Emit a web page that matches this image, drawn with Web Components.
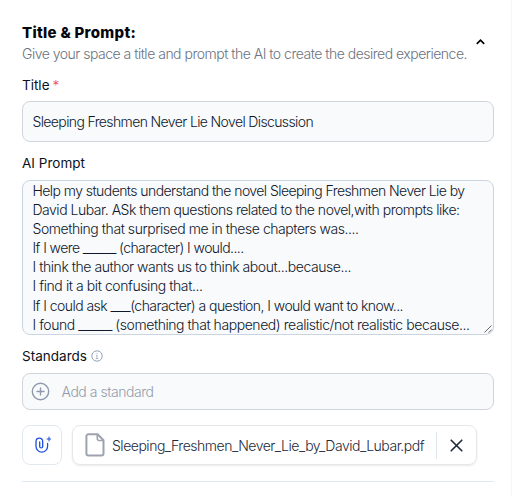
<!DOCTYPE html>
<html lang="en">
<head>
<meta charset="utf-8">
<title>Title &amp; Prompt</title>
<style>
  body {
    margin: 0;
    background: #fff;
    font-family: Inter, "Liberation Sans", sans-serif;
    font-size: 14px;
    color: #0f172a;
  }
</style>
</head>
<body>
<space-form></space-form>

<script>
// One line of text, tracked so that it fills the given width
class FitText extends HTMLElement {
  connectedCallback() {
    if (this.shadowRoot) return;
    this.attachShadow({ mode: "open" });
    this.shadowRoot.innerHTML = `
      <style>
        :host { display: block; }
        span { display: inline-block; white-space: pre; vertical-align: top; }
      </style>
      <span><slot></slot></span>
    `;
    this.fit();
  }

  fit() {
    const target = parseFloat(this.getAttribute("width"));
    const count = this.textContent.length;
    if (isNaN(target) || !count) return;
    const span = this.shadowRoot.querySelector("span");
    const natural = span.getBoundingClientRect().width;
    span.style.letterSpacing = (target - natural) / count + "px";
  }
}

class SectionHeader extends HTMLElement {
  connectedCallback() {
    this.attachShadow({ mode: "open" });
    this.shadowRoot.innerHTML = `
      <style>
        :host {
          display: flex;
          justify-content: space-between;
          align-items: flex-start;
        }
        .heading {
          font-size: 15px;
          font-weight: 800;
          line-height: 21px;
          color: #05070d;
        }
        .sub {
          font-weight: 300;
          line-height: 21px;
          color: #6b7280;
        }
        svg { display: block; margin: 16px 8px 0 0; }
      </style>
      <div>
        <div class="heading"><slot name="heading"></slot></div>
        <div class="sub"><slot name="sub"></slot></div>
      </div>
      <svg width="11" height="8" viewBox="0 0 11 8" fill="none" stroke="#000" stroke-width="1.7">
        <path d="M1.8 5.8 5.5 2.2 9.2 5.8"/>
      </svg>
    `;
  }
}

class FieldLabel extends HTMLElement {
  connectedCallback() {
    this.attachShadow({ mode: "open" });
    this.shadowRoot.innerHTML = `
      <style>
        :host {
          display: flex;
          align-items: center;
          height: 20px;
          gap: 4px;
          font-size: 13.5px;
          font-weight: 400;
          color: #0b1120;
        }
        .required { margin-left: -1px; font-weight: 300; color: #ef4444; }
      </style>
      <slot></slot>
      ${this.hasAttribute("required") ? '<span class="required">*</span>' : ""}
      ${this.hasAttribute("info") ? this.infoIcon() : ""}
    `;
  }

  infoIcon() {
    return `
      <svg width="12" height="12" viewBox="0 0 12 12" fill="none" stroke="#94a3b8">
        <circle cx="6" cy="6" r="5.2"/>
        <path d="M5 5.3h1v3.2M4.8 8.6h2.4M5.5 3.4h1" stroke-width=".8"/>
      </svg>`;
  }
}

class FieldBox extends HTMLElement {
  connectedCallback() {
    this.attachShadow({ mode: "open" });
    this.shadowRoot.innerHTML = `
      <style>
        :host {
          display: flex;
          align-items: center;
          box-sizing: border-box;
          padding: 0 9.5px;
          border: 1px solid #d1d5db;
          border-radius: 8px;
          background: #f8fafc;
          font-weight: 300;
        }
        :host([multiline]) {
          display: block;
          position: relative;
          border-color: #cbd5e1;
          line-height: 19.1px;
        }
        .grip { position: absolute; right: 0; bottom: 0; }
      </style>
      <slot></slot>
      ${this.hasAttribute("multiline") ? `
        <svg class="grip" width="9" height="9" viewBox="0 0 9 9" stroke="#555" stroke-width=".9">
          <path d="M.5 7.5l7-7M4.5 7.8l3.2-3.2"/>
        </svg>` : ""}
    `;
  }
}

class FileChip extends HTMLElement {
  connectedCallback() {
    this.attachShadow({ mode: "open" });
    this.shadowRoot.innerHTML = `
      <style>
        :host {
          display: flex;
          align-items: center;
          box-sizing: border-box;
          width: 405px;
          height: 40px;
          padding: 0 13px 0 12px;
          border: 1px solid #e5e7eb;
          border-radius: 8px;
          box-shadow: 0 1px 2px rgba(0, 0, 0, .09);
          font-weight: 300;
          color: #1e293b;
        }
        .name { flex: 1; margin-left: 7px; }
        .divider { width: 1px; height: 27px; background: #e2e8f0; margin-right: 13px; }
        svg { flex: none; }
      </style>
      <svg width="20" height="24" viewBox="0 0 20 24" fill="none" stroke="#9ca3af" stroke-width="2" stroke-linejoin="round">
        <path d="M3.4 1.3h9.2l5.9 5.9v13.4a2 2 0 0 1-2 2H3.4a2 2 0 0 1-2-2V3.3a2 2 0 0 1 2-2z"/>
        <path d="M12.3 1.5v4.2a1.8 1.8 0 0 0 1.8 1.8h4.2" stroke-width="1.6"/>
      </svg>
      <div class="name"><slot></slot></div>
      <div class="divider"></div>
      <svg width="13" height="13" viewBox="0 0 13 13" stroke="#1e293b" stroke-width="1.6" stroke-linecap="round">
        <path d="M1.2 1.2l10.6 10.6M11.8 1.2L1.2 11.8"/>
      </svg>
    `;
  }
}

class AttachButton extends HTMLElement {
  connectedCallback() {
    this.attachShadow({ mode: "open" });
    this.shadowRoot.innerHTML = `
      <style>
        :host {
          display: flex;
          align-items: center;
          justify-content: center;
          box-sizing: border-box;
          width: 40px;
          height: 40px;
          border: 1px solid #e2e8f0;
          border-radius: 8px;
        }
      </style>
      <svg width="18" height="18" viewBox="0 0 18 18" fill="none" stroke="#1d4fe0" stroke-width="1.3" stroke-linecap="round">
        <path d="M6.7 6v4.4a1.5 1.5 0 0 0 3 0V5.4a3.3 3.3 0 0 0-6.7 0v4.9a5.8 5.8 0 0 0 11.6 0V7.4"/>
        <path d="M16 1v4M14 3h4" stroke-width="1"/>
      </svg>
    `;
  }
}

class SpaceForm extends HTMLElement {
  connectedCallback() {
    this.attachShadow({ mode: "open" });
    this.shadowRoot.innerHTML = `
      <style>
        :host {
          display: flex;
          flex-direction: column;
          box-sizing: border-box;
          height: 496px;
          padding: 22px 17px 0 22px;
          border-right: 1px solid #f6f7f9;
          overflow: hidden;
        }
        .title-label { margin-top: 11px; }
        .title-box { height: 41px; margin-top: 6px; }
        .prompt-label { margin-top: 11px; }
        .prompt-box { height: 155px; margin-top: 7px; }
        .standards-label { margin-top: 11px; }
        .standards-box { height: 37px; margin-top: 7px; padding: 0 7.5px; }
        .standards-box svg { margin-right: 12px; }
        .placeholder { font-weight: 300; color: #949cab; }
        .blank { font-size: 16px; line-height: 1; }
        .files { display: flex; gap: 10px; margin-top: 15px; }
        hr { width: 100%; margin: 16px 0 0; border: 0; border-top: 1px solid #e2e8f0; }
      </style>
      <section-header>
        <fit-text slot="heading" width="114">Title &amp; Prompt:</fit-text>
        <fit-text slot="sub" width="445">Give your space a title and prompt the AI to create the desired experience.</fit-text>
      </section-header>

      <field-label class="title-label" required><fit-text width="27.5">Title</fit-text></field-label>
      <field-box class="title-box"><fit-text width="280.5">Sleeping Freshmen Never Lie Novel Discussion</fit-text></field-box>

      <field-label class="prompt-label"><fit-text width="63">AI Prompt</fit-text></field-label>
      <field-box class="prompt-box" multiline>
        <fit-text width="432">Help my students understand the novel Sleeping Freshmen Never Lie by</fit-text>
        <fit-text width="427">David Lubar. ASk them questions related to the novel,with prompts like:</fit-text>
        <fit-text width="326">Something that surprised me in these chapters was....</fit-text>
        <fit-text width="211">If I were <span class="blank">_____</span> (character) I would....</fit-text>
        <fit-text width="318.5">I think the author wants us to think about...because...</fit-text>
        <fit-text width="170">I find it a bit confusing that...</fit-text>
        <fit-text width="370.5">If I could ask <span class="blank">___</span>(character) a question, I would want to know...</fit-text>
        <fit-text width="437">I found <span class="blank">_____</span> (something that happened) realistic/not realistic because...</fit-text>
      </field-box>

      <field-label class="standards-label" info><fit-text width="65">Standards</fit-text></field-label>
      <field-box class="standards-box">
        <svg width="19" height="19" viewBox="0 0 19 19" fill="none" stroke="#8f9bad" stroke-width="1.4" stroke-linecap="round">
          <circle cx="9.5" cy="9.5" r="8.2"/>
          <path d="M9.5 6v7M6 9.5h7"/>
        </svg>
        <fit-text class="placeholder" width="92">Add a standard</fit-text>
      </field-box>

      <div class="files">
        <attach-button></attach-button>
        <file-chip><fit-text width="312">Sleeping_Freshmen_Never_Lie_by_David_Lubar.pdf</fit-text></file-chip>
      </div>
      <hr>
    `;
  }
}

customElements.define("section-header", SectionHeader);
customElements.define("field-label", FieldLabel);
customElements.define("field-box", FieldBox);
customElements.define("file-chip", FileChip);
customElements.define("attach-button", AttachButton);
customElements.define("space-form", SpaceForm);
// last, so that the lines are measured inside finished containers
customElements.define("fit-text", FitText);
</script>
</body>
</html>
